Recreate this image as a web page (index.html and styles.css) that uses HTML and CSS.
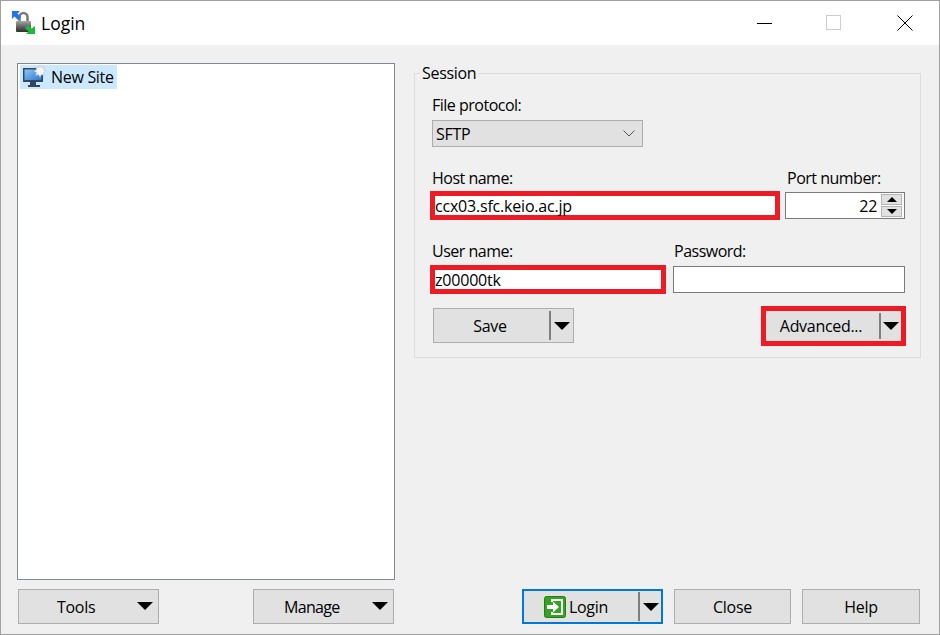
FILE: index.html
```html
<!DOCTYPE html>
<html lang="en">
<head>
<meta charset="utf-8">
<title>Login</title>
<link rel="stylesheet" href="styles.css">
</head>
<body>
<div class="window">
  <header class="titlebar">
    <svg class="app-icon" width="26" height="26" viewBox="0 0 26 26">
      <defs>
        <linearGradient id="lockGrad" x1="0" y1="0" x2="0" y2="1">
          <stop offset="0" stop-color="#a8a8a8"/>
          <stop offset="0.45" stop-color="#6a6a6a"/>
          <stop offset="1" stop-color="#2e2e2e"/>
        </linearGradient>
      </defs>
      <path d="M8.500 11V7a4 4 0 0 1 8 0v4" fill="none" stroke="#7c7c7c" stroke-width="2.600"/>
      <rect x="5" y="11" width="15" height="11" rx="1" fill="url(#lockGrad)"/>
      <path d="M1 1h8L6.500 3.500 10 7l-3 3-3.500-3.500L1 9z" fill="#1e78e8"/>
      <path d="M24 24h-9l2.500-2.500-3.500-3.500 3-3 3.500 3.500L24 16z" fill="#1fb83a"/>
    </svg>
    <span class="title-text">Login</span>
    <div class="win-controls">
      <svg width="16" height="16" viewBox="0 0 16 16"><path d="M0 8.500h15" stroke="#000"/></svg>
      <svg width="16" height="16" viewBox="0 0 16 16"><rect x="0.500" y="0.500" width="14" height="14" fill="none" stroke="#ccc"/></svg>
      <svg width="16" height="16" viewBox="0 0 16 16"><path d="M0.500 0.500l15 15M15.500 0.500l-15 15" stroke="#000" fill="none"/></svg>
    </div>
  </header>
  <main class="dialog">
    <section class="left-col">
      <div class="tree">
        <div class="tree-item">
          <svg width="26" height="24" viewBox="0 0 26 24">
            <defs>
              <linearGradient id="screenGrad" x1="0" y1="0" x2="1" y2="1">
                <stop offset="0" stop-color="#8cc8f5"/>
                <stop offset="1" stop-color="#2f78d0"/>
              </linearGradient>
            </defs>
            <rect x="1" y="3" width="20" height="14" fill="#33475c"/>
            <rect x="2.500" y="4.500" width="17" height="10.500" fill="url(#screenGrad)"/>
            <rect x="8" y="17" width="6" height="3" fill="#33475c"/>
            <rect x="6" y="20" width="12" height="2" fill="#33475c"/>
            <path d="M18 0l1.400 2.800 3-1-1 3L24 6.200l-2.600 1.400 1 3-3-1L18 12.400l-1.400-2.800-3 1 1-3L12 6.200l2.600-1.400-1-3 3 1z" fill="#f4f7fa" stroke="#a9bacb" stroke-width="0.500"/>
          </svg>
          <span>New Site</span>
        </div>
      </div>
      <div class="button-row">
        <button class="btn btn-menu" type="button"><span class="btn-label btn-label-tools">Tools</span><span class="arrow"></span></button>
        <button class="btn btn-menu" type="button"><span class="btn-label btn-label-manage">Manage</span><span class="arrow"></span></button>
      </div>
    </section>
    <section class="right-col">
      <fieldset class="session">
        <legend>Session</legend>
        <div class="field field-protocol">
          <label>File protocol:</label>
          <div class="select"><span>SFTP</span>
            <svg width="12" height="7" viewBox="0 0 12 7"><path d="M0.500 0.500L6 6l5.500-5.500" fill="none" stroke="#555"/></svg>
          </div>
        </div>
        <div class="row row-host">
          <div class="field field-host">
            <label>Host name:</label>
            <div class="input input-marked">ccx03.sfc.keio.ac.jp</div>
          </div>
          <div class="field field-port">
            <label>Port number:</label>
            <div class="input input-port"><span class="port-value">22</span>
              <div class="spinner">
                <span class="spin-btn"><i class="tri-up"></i></span>
                <span class="spin-btn"><i class="tri-down"></i></span>
              </div>
            </div>
          </div>
        </div>
        <div class="row row-user">
          <div class="field field-user">
            <label>User name:</label>
            <div class="input input-marked">z00000tk</div>
          </div>
          <div class="field field-pass">
            <label>Password:</label>
            <div class="input input-plain"></div>
          </div>
        </div>
        <div class="row row-actions">
          <button class="btn btn-split btn-save" type="button"><span class="split-main">Save</span><span class="split-side"><span class="arrow"></span></span></button>
          <div class="marked-box">
            <button class="btn btn-split btn-advanced" type="button"><span class="split-main">Advanced...</span><span class="split-side"><span class="arrow"></span></span></button>
          </div>
        </div>
      </fieldset>
      <div class="button-row button-row-main">
        <button class="btn btn-split btn-login" type="button">
          <span class="split-main">
            <svg width="22" height="22" viewBox="0 0 22 22">
              <rect x="0.500" y="0.500" width="21" height="21" rx="2" fill="#34a324" stroke="#1f7d12"/>
              <path d="M8 6V4h10v14H8v-2" fill="none" stroke="#fff" stroke-width="2"/>
              <path d="M3 9h6V5.500l6 5.500-6 5.500V13H3z" fill="#fff"/>
            </svg>
            <span>Login</span>
          </span>
          <span class="split-side"><span class="arrow"></span></span>
        </button>
        <button class="btn btn-close" type="button">Close</button>
        <button class="btn btn-help" type="button">Help</button>
      </div>
    </section>
  </main>
</div>
</body>
</html>
```

FILE: styles.css
```css
* { box-sizing: border-box; }
html, body { margin: 0; padding: 0; }
body {
  width: 940px;
  height: 635px;
  overflow: hidden;
  font-family: "Open Sans", "Noto Sans", sans-serif;
  font-size: 16px;
  letter-spacing: -0.3px;
  color: #000;
}
.window {
  width: 940px;
  height: 635px;
  border: 1px solid #a0a0a0;
  background: #f0f0f0;
  display: flex;
  flex-direction: column;
}
.titlebar {
  height: 44px;
  flex: none;
  background: #fff;
  display: flex;
  align-items: center;
  padding-left: 10px;
}
.app-icon { flex: none; }
.title-text { margin-left: 4px; font-size: 17.5px; letter-spacing: 0; }
.win-controls {
  margin-left: auto;
  display: flex;
  gap: 54px;
  padding-right: 26px;
}
.win-controls svg:nth-child(2) { margin-left: -1px; margin-right: 1px; }
.dialog {
  flex: 1;
  display: flex;
  gap: 19px;
  padding: 18px 18px 10px 16px;
  min-height: 0;
}
.left-col {
  width: 378px;
  flex: none;
  display: flex;
  flex-direction: column;
}
.tree {
  flex: 1;
  background: #fff;
  border: 1px solid #828790;
  padding: 1px 2px;
}
.tree-item {
  width: 97px;
  height: 24px;
  background: #cce8ff;
  display: flex;
  align-items: center;
  gap: 3px;
  padding-left: 2px;
}
.button-row {
  flex: none;
  display: flex;
  justify-content: space-between;
  padding: 9px 1px 0;
}
.btn {
  font: inherit;
  letter-spacing: inherit;
  color: #000;
  background: #e1e1e1;
  border: 1px solid #adadad;
  height: 35px;
  padding: 0;
  display: flex;
  align-items: center;
  justify-content: center;
}
.btn-menu {
  width: 141px;
  justify-content: flex-start;
}
.btn-label-tools { margin-left: 38px; }
.btn-label-manage { margin-left: 30px; letter-spacing: -0.7px; }
.btn-menu .arrow { margin-left: auto; margin-right: 5px; margin-top: -2px; }
.arrow {
  display: block;
  width: 0;
  height: 0;
  border-left: 8px solid transparent;
  border-right: 8px solid transparent;
  border-top: 8px solid #000;
}
.right-col {
  flex: 1;
  display: flex;
  flex-direction: column;
  min-width: 0;
}
.session {
  margin: 0;
  border: 1px solid #dcdcdc;
  padding: 12px 14px 11px 15px;
  height: 295px;
  min-width: 0;
}
.session legend {
  padding: 0 2px;
  margin-left: -10px;
  height: 20px;
  line-height: 20px;
}
.field { display: flex; flex-direction: column; }
.field label {
  display: block;
  height: 20px;
  line-height: 20px;
  margin-bottom: 3px;
  margin-left: 2px;
  letter-spacing: -0.5px;
}
.field-protocol label { margin-bottom: 5px; }
.select {
  margin-left: 2px;
  width: 211px;
  height: 27px;
  background: #e1e1e1;
  border: 1px solid #adadad;
  display: flex;
  align-items: center;
  justify-content: space-between;
  padding: 0 7px 0 3px;
}
.row { display: flex; }
.row-host { margin-top: 21px; gap: 5px; }
.row-user { margin-top: 21px; gap: 7px; }
.field-host { width: 350px; }
.field-port { width: 120px; }
.field-user { width: 236px; }
.field-pass { width: 232px; }
.field-port label { margin-left: 2px; margin-bottom: 4px; }
.field-user label { margin-bottom: 4px; }
.field-pass label { margin-left: 1px; margin-bottom: 5px; }
.input {
  background: #fff;
  height: 27px;
  border: 1px solid #7a7a7a;
  display: flex;
  align-items: center;
}
.input-marked {
  height: 29px;
  border: 5px solid #ed1c24;
  padding-left: 0;
  letter-spacing: -0.2px;
}
.input-port {
  justify-content: flex-end;
  padding-right: 2px;
}
.port-value { margin-right: 4px; }
.spinner { display: flex; flex-direction: column; gap: 1px; }
.spin-btn {
  width: 21px;
  height: 11px;
  background: #e1e1e1;
  border: 1px solid #b4b4b4;
  display: flex;
  align-items: center;
  justify-content: center;
}
.tri-up, .tri-down {
  display: block;
  width: 0;
  height: 0;
  border-left: 5px solid transparent;
  border-right: 5px solid transparent;
}
.tri-up { border-bottom: 5px solid #000; }
.tri-down { border-top: 5px solid #000; }
.row-actions {
  margin-top: 12px;
  justify-content: space-between;
  align-items: flex-start;
  height: 40px;
}
.btn-split { padding: 0; align-items: stretch; }
.split-main {
  flex: 1;
  display: flex;
  align-items: center;
  justify-content: center;
  gap: 3px;
  margin: 2px 0;
  border-right: 2px solid #7f7f7f;
  padding-right: 3px;
}
.split-side {
  flex: none;
  display: flex;
  align-items: center;
  justify-content: center;
  width: 22px;
}
.btn-save { width: 141px; margin-left: 3px; margin-top: 2px; }
.marked-box { border: 5px solid #ed1c24; width: 145px; height: 40px; }
.btn-advanced { width: 135px; height: 30px; border: none; }
.btn-advanced .split-side { width: 20px; }
.button-row-main {
  justify-content: flex-start;
  margin-top: auto;
  padding: 0 0 0 108px;
  gap: 11px;
}
.btn-login { width: 141px; border: 2px solid #0078d7; }
.btn-login .split-main { margin: 1px 0; padding-right: 10px; }
.btn-login .split-side { width: 21px; }
.btn-close { width: 117px; }
.btn-help { width: 118px; }
```
